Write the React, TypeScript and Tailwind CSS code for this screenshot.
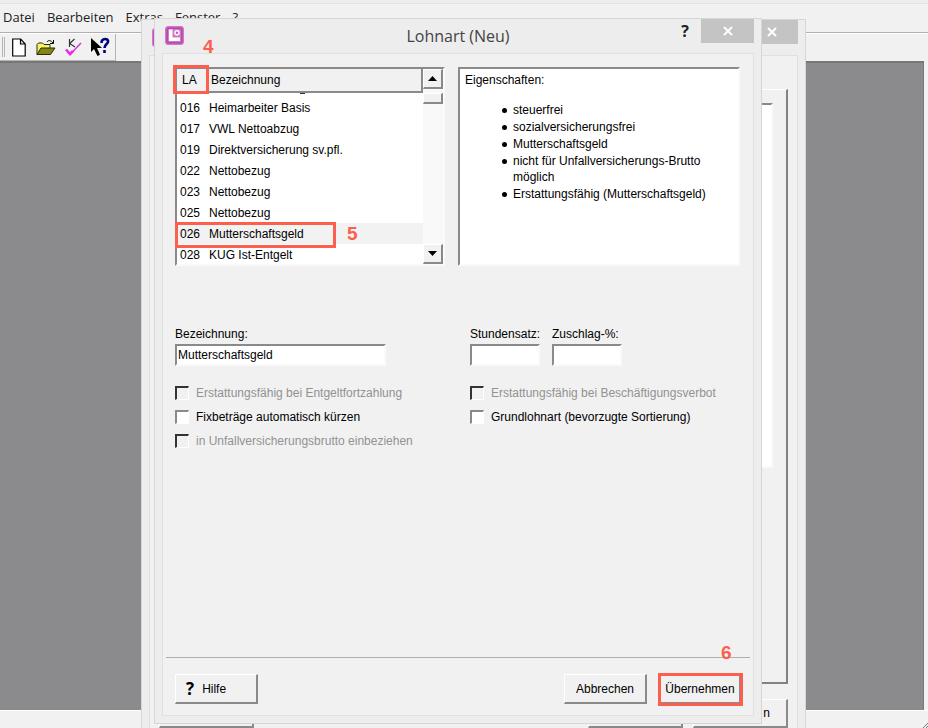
import React from 'react';
import { clsx } from 'clsx';

interface Lohnart {
  nr: string;
  name: string;
}

const LOHNARTEN: Lohnart[] = [
  { nr: '016', name: 'Heimarbeiter Basis' },
  { nr: '017', name: 'VWL Nettoabzug' },
  { nr: '019', name: 'Direktversicherung sv.pfl.' },
  { nr: '022', name: 'Nettobezug' },
  { nr: '023', name: 'Nettobezug' },
  { nr: '025', name: 'Nettobezug' },
  { nr: '026', name: 'Mutterschaftsgeld' },
  { nr: '028', name: 'KUG Ist-Entgelt' },
];

const EIGENSCHAFTEN = [
  'steuerfrei',
  'sozialversicherungsfrei',
  'Mutterschaftsgeld',
  'nicht für Unfallversicherungs-Brutto möglich',
  'Erstattungsfähig (Mutterschaftsgeld)',
];

const SUNKEN = 'border-2 border-t-[#8a8a8a] border-l-[#8a8a8a] border-r-[#fafafa] border-b-[#fafafa] bg-white';
const RAISED = 'border border-t-white border-l-white border-r-2 border-b-2 border-r-[#8a8a8a] border-b-[#8a8a8a] bg-[#f1f1f1]';

const Marker: React.FC<{ className: string; children: React.ReactNode }> = ({ className, children }) => (
  <span className={clsx("absolute font-['Liberation_Sans',sans-serif] text-[19px] leading-5 font-bold text-[#fd5f4f]", className)}>
    {children}
  </span>
);

const MarkerBox: React.FC<{ className: string }> = ({ className }) => (
  <span className={clsx('pointer-events-none absolute border-3 border-[#fd5f4f]', className)} />
);

const CloseButton: React.FC = () => (
  <button type="button" aria-label="Schließen" className="flex h-6 w-[53px] items-center justify-center bg-[#c4c4c4]">
    <svg width="10" height="10" viewBox="0 0 10 10" stroke="#fff" strokeWidth="2">
      <path d="M1 1l8 8M9 1l-8 8" />
    </svg>
  </button>
);

const AppIcon: React.FC = () => (
  <svg width="19" height="19" viewBox="0 0 19 19">
    <rect x="0.5" y="0.5" width="18" height="18" rx="2.5" fill="#c257b8" stroke="#cf78c8" />
    <rect x="2.5" y="2.5" width="14" height="14" rx="1.5" fill="#d27aca" stroke="#b548aa" />
    <path d="M4 3.5h3.500v8H15v3.500H4z" fill="#fff" />
    <circle cx="12" cy="6.800" r="2" fill="#c257b8" stroke="#fff" strokeWidth="1.500" />
  </svg>
);

const Check: React.FC<{ id: string; label: string; disabled?: boolean }> = ({ id, label, disabled }) => (
  <div className="flex items-center gap-[7px]">
    <input
      type="checkbox"
      id={id}
      disabled={disabled}
      className="size-[14px] shrink-0 appearance-none border-t-2 border-r border-b border-l-2 border-t-[#8a8a8a] border-r-white border-b-white border-l-[#8a8a8a] bg-white disabled:border-t-[#333] disabled:border-l-[#333] disabled:bg-[#f1f1f1]"
    />
    <label htmlFor={id} className={clsx('leading-4 whitespace-nowrap', disabled && 'text-[#929292]')}>
      {label}
    </label>
  </div>
);

const Field: React.FC<{ id: string; label: string; value?: string; className: string }> = ({ id, label, value = '', className }) => (
  <div className={clsx('flex flex-col gap-0.5', className)}>
    <label htmlFor={id} className="leading-4 whitespace-nowrap">{label}</label>
    <input id={id} type="text" defaultValue={value} className={clsx('h-[22px] w-full px-px', SUNKEN)} />
  </div>
);

const ScrollBar: React.FC = () => (
  <div className="flex w-5 shrink-0 flex-col bg-[#f9f9f9]">
    <button type="button" aria-label="Nach oben" className={clsx('flex h-5 items-center justify-center', RAISED)}>
      <svg width="9" height="5" viewBox="0 0 9 5"><path d="M0 5L4.500 0L9 5z" /></svg>
    </button>
    <div className={clsx('mt-1 h-[11px]', RAISED)} />
    <button type="button" aria-label="Nach unten" className={clsx('mt-auto flex h-5 items-center justify-center', RAISED)}>
      <svg width="9" height="5" viewBox="0 0 9 5"><path d="M0 0L4.500 5L9 0z" /></svg>
    </button>
  </div>
);

const LohnartListe: React.FC = () => (
  <div className="relative w-[270px] shrink-0">
    <div className={clsx('flex h-[199px] overflow-hidden', SUNKEN)}>
      <table className="h-fit flex-1 border-separate border-spacing-0 text-left">
        <thead>
          <tr className="h-6 bg-[#f1f1f1]">
            <th className="w-8 border-r border-b-2 border-[#8a8a8a] p-0 pl-[5px] font-normal">LA</th>
            <th className="border-r-2 border-b-2 border-[#8a8a8a] p-0 pl-0.5 font-normal">Bezeichnung</th>
          </tr>
        </thead>
        <tbody>
          <tr className="h-1">
            <td className="p-0" />
            <td className="p-0"><div className="mb-[3px] ml-[91px] h-px w-[5px] bg-[#333]" /></td>
          </tr>
          {LOHNARTEN.map((la) => (
            <tr key={la.nr} className={clsx('h-[21px]', la.nr === '026' && 'bg-[#f2f2f2]')}>
              <td className="p-0 pl-[3px]">{la.nr}</td>
              <td className="p-0">{la.name}</td>
            </tr>
          ))}
        </tbody>
      </table>
      <ScrollBar />
    </div>
    <MarkerBox className="-top-0.5 -left-0.5 h-[29px] w-9" />
    <MarkerBox className="top-[155px] left-0 h-[26px] w-[161px]" />
    <Marker className="-top-[30px] left-7">4</Marker>
    <Marker className="top-[157px] left-[172px]">5</Marker>
  </div>
);

const Desktop: React.FC = () => (
  <div className="flex h-full flex-col bg-[#f1f1f1]">
    <div className="h-1 border-b border-[#e2e2e2] bg-[#ededed]" />
    <nav className="flex h-[29px] items-center gap-3 border-b border-[#b0b0b0] px-[3px] font-['Open_Sans','Noto_Sans',sans-serif] text-[13px] text-[#222]">
      <button type="button">Datei</button>
      <button type="button">Bearbeiten</button>
      <button type="button">Extras</button>
      <button type="button">Fenster</button>
      <button type="button">?</button>
    </nav>
    <div className="flex h-7 border-t border-white">
      <div className="flex items-center border-r border-b border-[#b5b5b5] pr-[5px] pl-0.5">
        <span className="mr-[7px] h-5 w-[3px] border-r border-l border-[#b5b5b5]" />
        <button type="button" aria-label="Neu" className="mr-[10px]">
          <svg width="14" height="19" viewBox="0 0 14 19" fill="#fff" stroke="#000" strokeWidth="1.2">
            <path d="M0.700 1h8l4.500 5v12H0.700zM8.500 1v5h4.700" />
          </svg>
        </button>
        <button type="button" aria-label="Öffnen" className="mr-[9px]">
          <svg width="20" height="17" viewBox="0 0 20 17" stroke="#2d2d00">
            <path d="M1 15.500V5.500l1.500-1.500h4l1.500 1.500h6V9" fill="#f6f36a" />
            <path d="M1 15.500L5 9h14l-4.500 6.500z" fill="#85851a" />
            <path d="M11 3c1-2 4-2 6 1M17.500 1v3.500h-3.500" fill="none" stroke="#000" />
          </svg>
        </button>
        <button type="button" aria-label="Prüfen" className="mr-2">
          <svg width="17" height="19" viewBox="0 0 17 19" fill="none">
            <path d="M4.500 1v8M9.500 1L4.700 5.500L10 9" stroke="#333" strokeWidth="1.200" />
            <path d="M5 16.500L16 5" stroke="#d92ed9" strokeWidth="1.400" />
            <path d="M1 11.500l4 4.500l3-3" stroke="#e62ee6" strokeWidth="2.600" />
          </svg>
        </button>
        <button type="button" aria-label="Kontexthilfe">
          <svg width="20" height="20" viewBox="0 0 20 20">
            <path d="M1 1v14l3-3l3.500 7l2.500-1.200L7 11h5z" fill="#000" />
            <path d="M11.500 6c0-5.500 7.500-5 6.500-1c-.5 2-3.500 2.500-3.500 6M14.500 13v3" fill="none" stroke="#00007f" strokeWidth="2.600" />
          </svg>
        </button>
      </div>
    </div>
    <div className="mr-1 flex-1 border-t-2 border-r border-[#777] bg-[#8b8b8d]" />
    <div className="flex h-[18px] items-end justify-end border-t border-white">
      <svg width="6" height="6" viewBox="0 0 6 6" stroke="#777"><path d="M1 6L6 1M4 6L6 4" /></svg>
    </div>
  </div>
);

const BackWindow: React.FC = () => (
  <section className="absolute top-[19px] right-[122px] -bottom-4 left-[141px] flex flex-col border border-[#d6d6d6] bg-[#ededed] px-[7px]">
    <header className="flex h-[35px] items-start justify-between">
      <span className="mt-2 ml-[3px]"><AppIcon /></span>
      <CloseButton />
    </header>
    <div className="flex flex-1 flex-col border border-[#e0e0e0] bg-[#f1f1f1] px-[9px] pt-[33px]">
      <div className="flex h-[595px] border-t border-r-2 border-b-2 border-l border-t-white border-r-[#828282] border-b-[#828282] border-l-white pt-[13px] pr-[13px] pl-2">
        <div className={clsx('h-[365px] flex-1', SUNKEN)} />
      </div>
      <div className="mt-[15px] flex gap-[10px]">
        <button type="button" aria-label="Hilfe" className={clsx('mr-auto h-[29px] w-[95px]', RAISED)} />
        <button type="button" aria-label="Bearbeiten" className={clsx('h-[29px] w-[95px]', RAISED)} />
        <button type="button" aria-label="Schließen" className={clsx('h-[29px] w-[95px] pr-4 text-right', RAISED)}>n</button>
      </div>
    </div>
  </section>
);

const LohnartDialog: React.FC = () => (
  <section className="absolute top-[18px] right-[166px] bottom-1 left-[154px] flex flex-col border border-[#d6d6d6] bg-[#ededed] px-[7px] pb-[7px]">
    <header className="grid h-[34px] grid-cols-[1fr_auto_1fr] items-start">
      <span className="mt-[7px] ml-[3px]"><AppIcon /></span>
      <h1 className="mt-[3px] font-['Open_Sans','Noto_Sans',sans-serif] text-[16px] leading-7 text-[#444]">Lohnart (Neu)</h1>
      <div className="flex justify-end">
        <button type="button" aria-label="Hilfe" className="mr-3 h-6 font-['Open_Sans',sans-serif] text-[16px] font-bold text-[#222]">?</button>
        <CloseButton />
      </div>
    </header>
    <div className="flex flex-1 flex-col border border-[#e0e0e0] bg-[#f1f1f1] px-[3px] pt-[13px] pb-[11px]">
      <div className="flex gap-[13px] pr-[10px] pl-[9px]">
        <LohnartListe />
        <div className={clsx('flex-1 px-[5px] py-[3px]', SUNKEN)}>
          <h2 className="leading-4">Eigenschaften:</h2>
          <ul className="mt-[14px] flex flex-col gap-px pl-12 leading-4">
            {EIGENSCHAFTEN.map((text) => (
              <li key={text} className="relative before:absolute before:top-[6px] before:-left-[11px] before:size-[5px] before:rounded-full before:bg-black">
                {text}
              </li>
            ))}
          </ul>
        </div>
      </div>

      <div className="mt-[60px] flex pl-[9px]">
        <div className="w-[295px] shrink-0">
          <Field id="bezeichnung" label="Bezeichnung:" value="Mutterschaftsgeld" className="w-[211px]" />
          <div className="mt-[19px] flex flex-col gap-2">
            <Check id="fortzahlung" label="Erstattungsfähig bei Entgeltfortzahlung" disabled />
            <Check id="fixbetraege" label="Fixbeträge automatisch kürzen" />
            <Check id="unfall" label="in Unfallversicherungsbrutto einbeziehen" disabled />
          </div>
        </div>
        <div>
          <div className="flex gap-3">
            <Field id="stundensatz" label="Stundensatz:" className="w-[70px]" />
            <Field id="zuschlag" label="Zuschlag-%:" className="w-[70px]" />
          </div>
          <div className="mt-[19px] flex flex-col gap-2">
            <Check id="verbot" label="Erstattungsfähig bei Beschäftigungsverbot" disabled />
            <Check id="grundlohn" label="Grundlohnart (bevorzugte Sortierung)" />
          </div>
        </div>
      </div>

      <footer className="mt-auto flex border-t border-[#b0b0b0] pt-4 pr-[9px] pl-[9px]">
        <button type="button" className={clsx('mr-auto flex h-[30px] w-[83px] items-center gap-2 pl-[10px]', RAISED)}>
          <span className="font-['Open_Sans',sans-serif] text-[17px] font-bold">?</span>
          Hilfe
        </button>
        <button type="button" className={clsx('mr-[13px] h-[30px] w-[83px]', RAISED)}>Abbrechen</button>
        <div className="relative">
          <button type="button" className={clsx('h-[30px] w-[81px] whitespace-nowrap', RAISED)}>Übernehmen</button>
          <MarkerBox className="-top-px -right-0.5 -bottom-0.5 -left-0.5" />
          <Marker className="-top-[31px] left-[61px]">6</Marker>
        </div>
      </footer>
    </div>
  </section>
);

const App: React.FC = () => {
  return (
    <main className="relative h-screen overflow-hidden font-['Liberation_Sans',Arial,sans-serif] text-[12px] text-black">
      <Desktop />
      <BackWindow />
      <LohnartDialog />
    </main>
  );
};

export default App;
